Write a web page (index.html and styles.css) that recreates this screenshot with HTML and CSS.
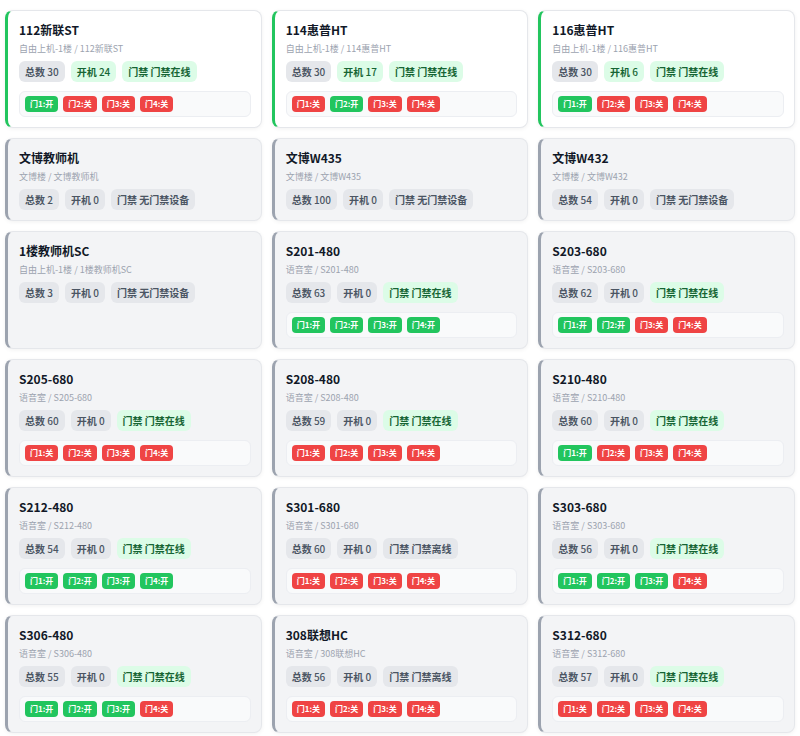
FILE: index.html
```html
<!DOCTYPE html>
<html lang="zh-CN">
<head>
  <meta charset="UTF-8">
  <meta name="viewport" content="width=device-width, initial-scale=1.0">
  <title>机房状态</title>
  <link rel="stylesheet" href="styles.css">
</head>
<body>
  <div class="grid" id="roomGrid"></div>

  <script>
    // 机房数据: doors 为 1=开 0=关, null 表示无门禁设备
    const rooms = [
      { name: '112新联ST', area: '自由上机-1楼', total: 30, on: 24, acs: 'online', doors: [1, 0, 0, 0] },
      { name: '114惠普HT', area: '自由上机-1楼', total: 30, on: 17, acs: 'online', doors: [0, 1, 0, 0] },
      { name: '116惠普HT', area: '自由上机-1楼', total: 30, on: 6, acs: 'online', doors: [1, 0, 0, 0] },
      { name: '文博教师机', area: '文博楼', total: 2, on: 0, acs: 'none', doors: null },
      { name: '文博W435', area: '文博楼', total: 100, on: 0, acs: 'none', doors: null },
      { name: '文博W432', area: '文博楼', total: 54, on: 0, acs: 'none', doors: null },
      { name: '1楼教师机SC', area: '自由上机-1楼', total: 3, on: 0, acs: 'none', doors: null },
      { name: 'S201-480', area: '语音室', total: 63, on: 0, acs: 'online', doors: [1, 1, 1, 1] },
      { name: 'S203-680', area: '语音室', total: 62, on: 0, acs: 'online', doors: [1, 1, 0, 0] },
      { name: 'S205-680', area: '语音室', total: 60, on: 0, acs: 'online', doors: [0, 0, 0, 0] },
      { name: 'S208-480', area: '语音室', total: 59, on: 0, acs: 'online', doors: [0, 0, 0, 0] },
      { name: 'S210-480', area: '语音室', total: 60, on: 0, acs: 'online', doors: [1, 0, 0, 0] },
      { name: 'S212-480', area: '语音室', total: 54, on: 0, acs: 'online', doors: [1, 1, 1, 1] },
      { name: 'S301-680', area: '语音室', total: 60, on: 0, acs: 'offline', doors: [0, 0, 0, 0] },
      { name: 'S303-680', area: '语音室', total: 56, on: 0, acs: 'online', doors: [1, 1, 1, 0] },
      { name: 'S306-480', area: '语音室', total: 55, on: 0, acs: 'online', doors: [1, 1, 1, 0] },
      { name: '308联想HC', area: '语音室', total: 56, on: 0, acs: 'offline', doors: [0, 0, 0, 0] },
      { name: 'S312-680', area: '语音室', total: 57, on: 0, acs: 'online', doors: [0, 0, 0, 0] }
    ];

    const acsText = { online: '门禁在线', offline: '门禁离线', none: '无门禁设备' };
    const grid = document.getElementById('roomGrid');

    rooms.forEach(room => {
      const card = document.createElement('div');
      card.className = 'card' + (room.on > 0 ? ' active' : '');

      let html = `
        <div class="name">${room.name}</div>
        <div class="path">${room.area} / ${room.name}</div>
        <div class="chips">
          <span class="chip"><b>总数</b> ${room.total}</span>
          <span class="chip${room.on > 0 ? ' ok' : ''}"><b>开机</b> ${room.on}</span>
          <span class="chip${room.acs === 'online' ? ' ok' : ''}"><b>门禁</b> <b>${acsText[room.acs]}</b></span>
        </div>`;

      if (room.doors) {
        html += '<div class="doors">';
        room.doors.forEach((d, i) => {
          html += `<span class="door${d ? ' open' : ''}">门${i + 1}:${d ? '开' : '关'}</span>`;
        });
        html += '</div>';
      }

      card.innerHTML = html;
      grid.appendChild(card);
    });
  </script>
</body>
</html>
```

FILE: styles.css
```css
body {
  margin: 0;
  font-family: "Noto Sans CJK SC", "Noto Sans", sans-serif;
  background: #fff;
}
.grid {
  display: grid;
  grid-template-columns: repeat(3, 1fr);
  gap: 10px;
  padding: 10px 5px;
}
.card {
  background: #f3f4f6;
  border: 1px solid #e5e7eb;
  border-left: 3px solid #9ca3af;
  border-radius: 8px;
  padding: 10px 10px 10px 11px;
  box-shadow: 0 1px 4px rgba(0, 0, 0, 0.06);
}
.card.active {
  background: #fff;
  border-left-color: #22c55e;
}
.name {
  font-size: 12px;
  font-weight: 700;
  line-height: 18px;
  color: #111827;
}
.path {
  margin-top: 3px;
  font-size: 9px;
  line-height: 14px;
  color: #9ca3af;
}
.chips {
  display: flex;
  gap: 6px;
  margin-top: 5px;
}
.chip {
  font-size: 10px;
  line-height: 13px;
  padding: 4px 6px;
  border-radius: 6px;
  background: #e5e7eb;
  color: #4b5563;
  font-weight: 500;
}
.chip b {
  font-weight: 700;
}
.chip.ok {
  background: #dcfce7;
  color: #166534;
}
.doors {
  display: flex;
  gap: 5px;
  margin-top: 9px;
  padding: 4px 5px;
  border: 1px solid #eceef2;
  background: #f9fafb;
  border-radius: 6px;
}
.door {
  font-size: 8px;
  font-weight: 700;
  line-height: 16px;
  padding: 0 5px;
  border-radius: 4px;
  color: #fff;
  background: #ef4444;
}
.door.open {
  background: #22c55e;
}
```
